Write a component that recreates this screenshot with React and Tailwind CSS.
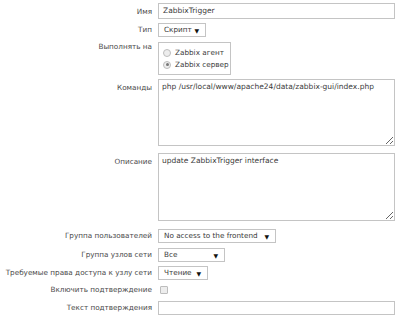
import React from "react";

const font = { fontFamily: '"DejaVu Sans", Verdana, sans-serif' };

function Label({ children, pt = "pt-[3px]" }) {
  return (
    <div className={`w-[152px] shrink-0 whitespace-nowrap text-right text-[7.25px] leading-[10px] text-[#4a4a4a] ${pt}`}>
      {children}
    </div>
  );
}

function Select({ text, w }) {
  return (
    <div className={`flex h-[14px] items-center justify-between whitespace-nowrap border border-[#c4c4c4] bg-white pl-[5px] pr-[6px] text-[7.25px] text-[#3a3a3a] ${w}`}>
      <span>{text}</span>
      <span className="text-[6px] text-[#111]">▼</span>
    </div>
  );
}

function Radio({ checked, label }) {
  return (
    <div className="flex items-center gap-[4px] whitespace-nowrap">
      <div className="flex h-[8px] w-[8px] items-center justify-center rounded-full border border-[#bdbdbd] bg-[#ededed]">
        {checked && <div className="h-[3px] w-[3px] rounded-full bg-[#777]" />}
      </div>
      <span className="text-[7.25px] leading-[10px] text-[#3a3a3a]">{label}</span>
    </div>
  );
}

export default function App() {
  return (
    <div className="h-[315px] w-[400px] overflow-hidden bg-white" style={font}>
      <div className="flex flex-col pt-[3px]">
        <div className="flex items-start gap-[6px]">
          <Label pt="pt-[4px]">Имя</Label>
          <div className="flex h-[16px] w-[237px] items-center border border-[#c4c4c4] px-[4px] text-[7.5px] text-[#3a3a3a]">
            ZabbixTrigger
          </div>
        </div>
        <div className="mt-[4px] flex items-start gap-[6px]">
          <Label pt="pt-[2px]">Тип</Label>
          <Select text="Скрипт" w="w-[48px]" />
        </div>
        <div className="mt-[5px] flex items-start gap-[6px]">
          <Label pt="pt-[0px]">Выполнять на</Label>
          <div className="flex h-[33px] w-[73px] flex-col justify-center gap-[2px] border border-[#c4c4c4] pl-[4px]">
            <Radio label="Zabbix агент" />
            <Radio checked label="Zabbix сервер" />
          </div>
        </div>
        <div className="mt-[4px] flex items-start gap-[6px]">
          <Label pt="pt-[4px]">Команды</Label>
          <textarea
            readOnly
            value="php /usr/local/www/apache24/data/zabbix-gui/index.php"
            className="h-[67px] w-[237px] border border-[#c4c4c4] px-[3px] py-[2px] text-[7.5px] leading-[10px] text-[#3a3a3a] outline-none"
          />
        </div>
        <div className="mt-[7px] flex items-start gap-[6px]">
          <Label pt="pt-[4px]">Описание</Label>
          <textarea
            readOnly
            value="update ZabbixTrigger interface"
            className="h-[68px] w-[237px] border border-[#c4c4c4] px-[3px] py-[2px] text-[7.5px] leading-[10px] text-[#3a3a3a] outline-none"
          />
        </div>
        <div className="mt-[8px] flex items-start gap-[6px]">
          <Label pt="pt-[2px]">Группа пользователей</Label>
          <Select text="No access to the frontend" w="w-[118px]" />
        </div>
        <div className="mt-[5px] flex items-start gap-[6px]">
          <Label pt="pt-[2px]">Группа узлов сети</Label>
          <Select text="Все" w="w-[67px]" />
        </div>
        <div className="mt-[4px] flex items-start gap-[6px]">
          <Label pt="pt-[2px]">Требуемые права доступа к узлу сети</Label>
          <Select text="Чтение" w="w-[50px]" />
        </div>
        <div className="mt-[5px] flex items-center gap-[6px]">
          <Label pt="pt-[0px]">Включить подтверждение</Label>
          <div className="ml-[2px] h-[8px] w-[8px] rounded-[1px] border border-[#bdbdbd] bg-[#ededed]" />
        </div>
        <div className="mt-[6px] flex items-start gap-[6px]">
          <Label pt="pt-[2px]">Текст подтверждения</Label>
          <div className="h-[14px] w-[237px] border border-[#c4c4c4]" />
        </div>
      </div>
    </div>
  );
}
